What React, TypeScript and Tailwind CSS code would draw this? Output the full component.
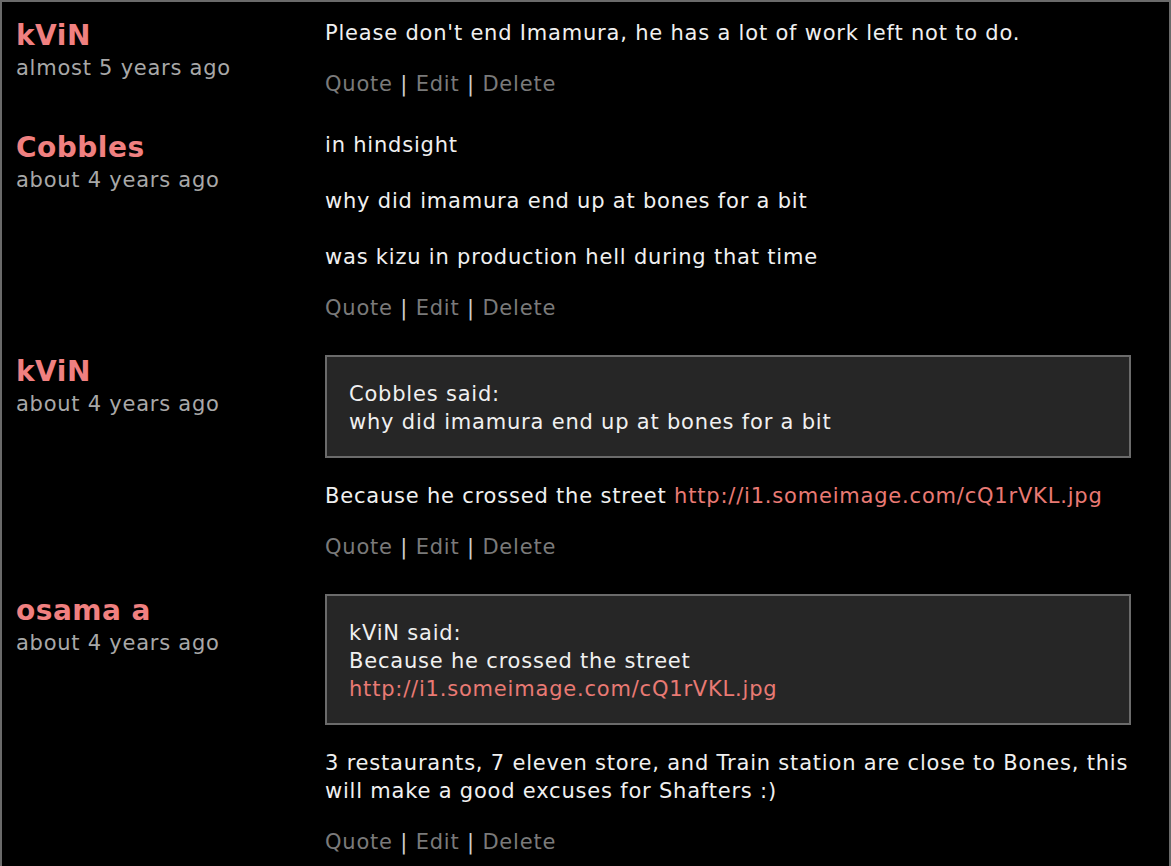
import React from "react";

type Part = { text: string; link?: boolean };
type Post = {
  name: string;
  time: string;
  quote?: { author: string; lines: Part[][] };
  paras: Part[][];
};

const posts: Post[] = [
  {
    name: "kViN",
    time: "almost 5 years ago",
    paras: [[{ text: "Please don't end Imamura, he has a lot of work left not to do." }]],
  },
  {
    name: "Cobbles",
    time: "about 4 years ago",
    paras: [
      [{ text: "in hindsight" }],
      [{ text: "why did imamura end up at bones for a bit" }],
      [{ text: "was kizu in production hell during that time" }],
    ],
  },
  {
    name: "kViN",
    time: "about 4 years ago",
    quote: {
      author: "Cobbles",
      lines: [[{ text: "why did imamura end up at bones for a bit" }]],
    },
    paras: [
      [
        { text: "Because he crossed the street " },
        { text: "http://i1.someimage.com/cQ1rVKL.jpg", link: true },
      ],
    ],
  },
  {
    name: "osama a",
    time: "about 4 years ago",
    quote: {
      author: "kViN",
      lines: [
        [{ text: "Because he crossed the street" }],
        [{ text: "http://i1.someimage.com/cQ1rVKL.jpg", link: true }],
      ],
    },
    paras: [
      [
        {
          text: "3 restaurants, 7 eleven store, and Train station are close to Bones, this will make a good excuses for Shafters :)",
        },
      ],
    ],
  },
];

function Parts({ parts }: { parts: Part[] }) {
  return (
    <>
      {parts.map((p, i) =>
        p.link ? (
          <a key={i} className="text-[#e97a74]">
            {p.text}
          </a>
        ) : (
          <span key={i}>{p.text}</span>
        )
      )}
    </>
  );
}

export default function App() {
  return (
    <div
      className="w-[1171px] h-[866px] overflow-hidden bg-black border-2 border-[#6a6a6a] border-b-0 text-[#f0f0f0]"
      style={{ fontFamily: '"DejaVu Sans", Verdana, sans-serif' }}
    >
      <div className="flex flex-col gap-[32px] pt-[16px] pl-[14px] pr-[38px]">
        {posts.map((post, idx) => (
          <div key={idx} className="flex">
            <div className="w-[309px] shrink-0">
              <div className="text-[#f08080] font-bold text-[28px] leading-[36px] tracking-[0.5px]">
                {post.name}
              </div>
              <div className="text-[#a8a8a8] text-[21px] leading-[28px] tracking-[0.75px]">
                {post.time}
              </div>
            </div>
            <div className="flex-1 min-w-0 pt-[1px] text-[21px] leading-[28px] tracking-[0.8px]">
              {post.quote && (
                <div className="bg-[#262626] border-2 border-[#6b6b6b] pl-[22px] pr-[22px] pt-[23px] pb-[20px] mb-[24px]">
                  <div>{post.quote.author} said:</div>
                  {post.quote.lines.map((l, i) => (
                    <div key={i}>
                      <Parts parts={l} />
                    </div>
                  ))}
                </div>
              )}
              <div className="flex flex-col gap-[28px]">
                {post.paras.map((p, i) => (
                  <p key={i}>
                    <Parts parts={p} />
                  </p>
                ))}
              </div>
              <div className="mt-[23px] text-[#7a7a7a]">
                <span>Quote</span>
                <span className="text-[#d0d0d0]"> | </span>
                <span>Edit</span>
                <span className="text-[#d0d0d0]"> | </span>
                <span>Delete</span>
              </div>
            </div>
          </div>
        ))}
      </div>
    </div>
  );
}
